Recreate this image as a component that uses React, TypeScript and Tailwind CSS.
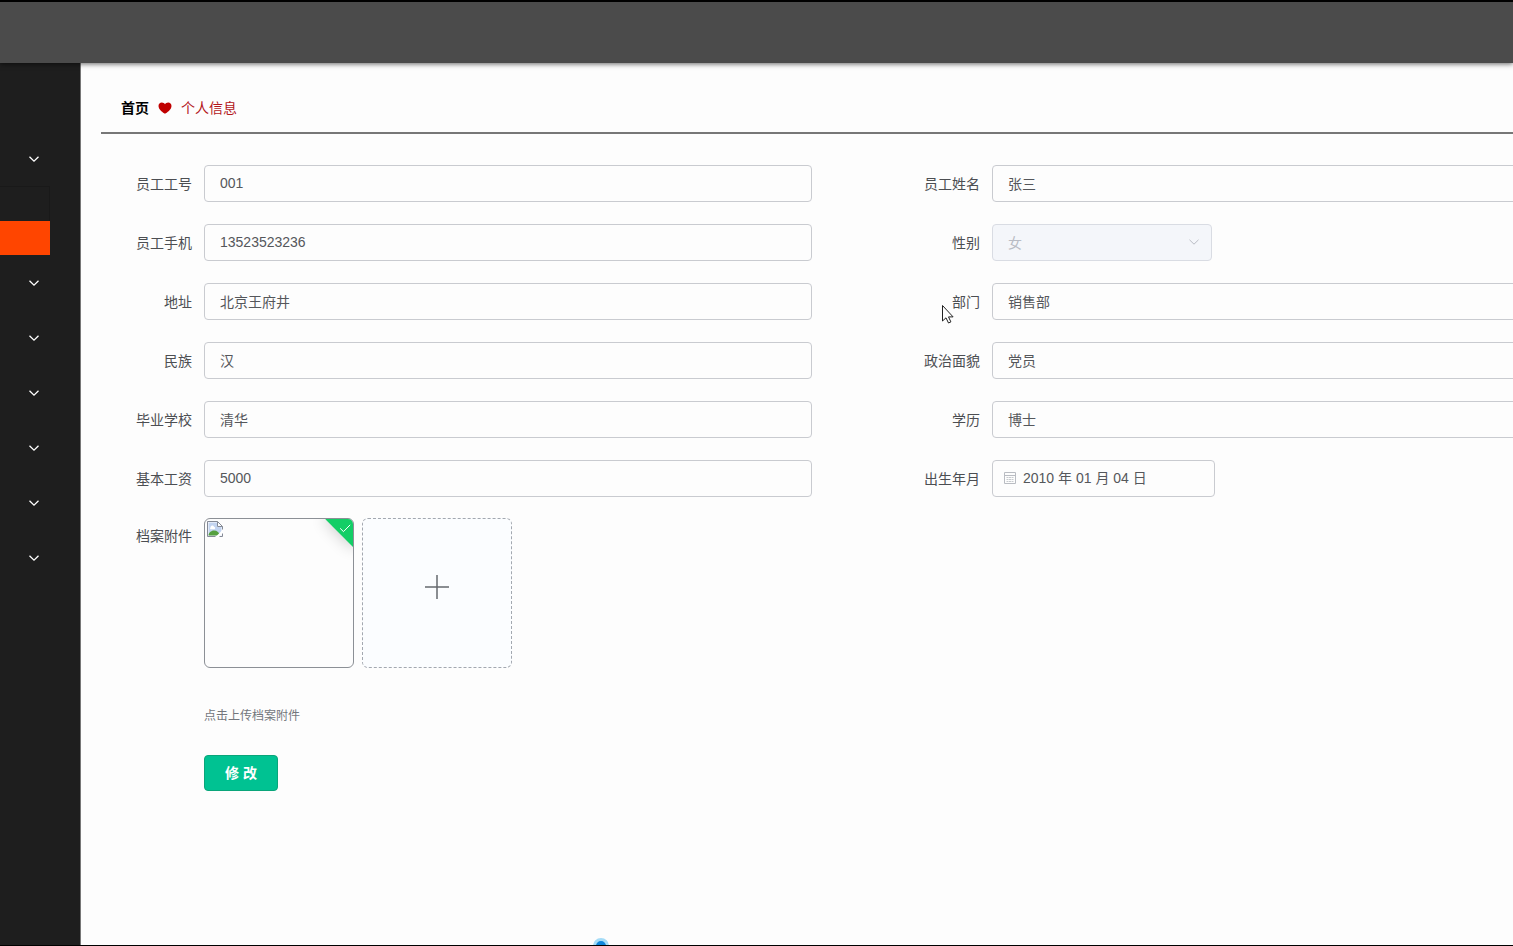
import React, { useState } from "react";

interface Employee {
  id: string;
  name: string;
  phone: string;
  gender: string;
  address: string;
  department: string;
  nation: string;
  politics: string;
  school: string;
  education: string;
  salary: string;
  birthday: string;
}

type Field = { key: keyof Employee; label: string; type?: "select" | "date" };

const fields: Field[] = [
  { key: "id", label: "员工工号" },
  { key: "name", label: "员工姓名" },
  { key: "phone", label: "员工手机" },
  { key: "gender", label: "性别", type: "select" },
  { key: "address", label: "地址" },
  { key: "department", label: "部门" },
  { key: "nation", label: "民族" },
  { key: "politics", label: "政治面貌" },
  { key: "school", label: "毕业学校" },
  { key: "education", label: "学历" },
  { key: "salary", label: "基本工资" },
  { key: "birthday", label: "出生年月", type: "date" },
];

const inputClass =
  "h-[37px] w-full rounded border border-[#c9cbd0] bg-[#fdfdfd] px-[15px] pb-[2px] text-sm text-[#55575b] outline-none focus:border-[#409eff]";

const Chevron = ({ className }: { className?: string }) => (
  <svg viewBox="0 0 12 12" className={className} fill="none" stroke="currentColor">
    <path d="M1.5 3.800 6 8.200l4.500-4.400" />
  </svg>
);

const Heart = () => (
  <svg viewBox="0 0 14 12" className="h-3 w-[14px]" fill="#c00000">
    <path d="M7 11.8C5.2 10.600.5 7.600.5 3.900.5 1.900 2 .5 3.800.5 5.200.5 6.400 1.200 7 2.300 7.600 1.200 8.800.5 10.200.5 12 .5 13.500 1.900 13.500 3.900 13.500 7.600 8.800 10.600 7 11.800z" />
  </svg>
);

const CalendarIcon = () => (
  <svg viewBox="0 0 14 14" className="h-[14px] w-[14px]" fill="none" stroke="#b9bcc2">
    <path d="M1.500 1.500h11v11h-11zM1.500 4.500h11" />
    <path d="M3.500 6.500h2M6 6.500h2M8.500 6.500h2M3.500 8.500h2M6 8.500h2M8.500 8.500h2M3.500 10.500h2M6 10.500h2M8.500 10.500h2" strokeWidth=".8" />
  </svg>
);

const BrokenImage = () => (
  <svg viewBox="0 0 16 16" className="h-4 w-4">
    <path d="M.5.500h10l5 5v10H.500z" fill="#fff" />
    <path d="M1.500 1.500h8.500v4.500h4.500v8.500h-13z" fill="#c3d4f0" />
    <path d="M3.500 6.500a1.800 1.800 0 0 1 3.500-.7 1.400 1.400 0 0 1 .6 2.500H4.300a1 1 0 0 1-.8-1.800z" fill="#fff" />
    <path d="M1.500 14.500c0-2.500 2.500-5 5.500-5s5.500 2 6 5z" fill="#55a03f" />
    <path d="M16 8.500 8.500 16h3.500l4-3.500z" fill="#fff" />
    <path d="M8.500 15.500H.500V.500h10l5 5v3M10.500.500v5h5M12.500 15.500h3v-3" fill="none" stroke="#858a96" />
  </svg>
);

const Sidebar = () => (
  <aside className="w-20 shrink-0 bg-[#1e1e1e] pt-[68px] shadow-[1px_0_0_#777]">
    <nav className="w-[50px] text-white">
      <MenuItem />
      <div className="border-t border-r border-[#191919] pt-[34px]">
        <button aria-label="个人信息" className="block h-[34px] w-[50px] bg-[#ff4500]"></button>
      </div>
      {[1, 2, 3, 4, 5, 6].map((i) => (
        <MenuItem key={i} />
      ))}
    </nav>
  </aside>
);

const MenuItem = () => (
  <button aria-label="展开菜单" className="flex h-[55px] w-full items-center justify-end pr-[10px]">
    <Chevron className="h-3 w-3 stroke-[1.3]" />
  </button>
);

const App = () => {
  // States
  const [employee, setEmployee] = useState<Employee>({
    id: "001",
    name: "张三",
    phone: "13523523236",
    gender: "女",
    address: "北京王府井",
    department: "销售部",
    nation: "汉",
    politics: "党员",
    school: "清华",
    education: "博士",
    salary: "5000",
    birthday: "2010 年 01 月 04 日",
  });
  // Functions
  const handleChange = (key: keyof Employee, value: string) => {
    setEmployee({ ...employee, [key]: value });
  };
  const renderField = ({ key, type }: Field) => {
    if (type === "select") {
      return (
        <div className="relative w-[220px]">
          <select
            id={key}
            disabled
            value={employee[key]}
            onChange={(e) => handleChange(key, e.target.value)}
            className="h-[37px] w-full appearance-none rounded border border-[#d9dce3] bg-[#f4f6fa] px-[15px] text-sm text-[#b9bcc4] opacity-100"
          >
            <option>女</option>
            <option>男</option>
          </select>
          <Chevron className="pointer-events-none absolute top-3 right-3 h-3 w-3 text-[#b9bcc4]" />
        </div>
      );
    }
    if (type === "date") {
      return (
        <div className="flex h-[37px] w-[223px] items-center gap-[6px] rounded border border-[#c9cbd0] bg-[#fdfdfd] px-[10px] pb-[2px]">
          <CalendarIcon />
          <input
            id={key}
            value={employee[key]}
            onChange={(e) => handleChange(key, e.target.value)}
            className="min-w-0 flex-1 text-sm text-[#55575b] outline-none"
          />
        </div>
      );
    }
    return (
      <input
        id={key}
        value={employee[key]}
        onChange={(e) => handleChange(key, e.target.value)}
        className={inputClass}
      />
    );
  };
  return (
    <div className="relative flex min-h-screen flex-col overflow-hidden border-t-2 border-b border-black bg-[#fdfdfd] font-['Liberation_Sans','Noto_Sans_CJK_SC',sans-serif] text-sm">
      {/* header */}
      <header className="z-10 h-[61px] bg-[#4b4b4b] shadow-[0_1px_5px_rgba(0,0,0,0.6)]"></header>
      <div className="flex flex-1">
        <Sidebar />
        <main className="min-w-0 flex-1 pt-5 pl-[21px]">
          <div className="flex h-[51px] items-center gap-[9px] border-b-2 border-[#777] pl-5">
            <a href="#" className="font-bold text-black">
              首页
            </a>
            <Heart />
            <span className="text-[#b3161b]">个人信息</span>
          </div>
          {/* form */}
          <form className="mt-[31px] w-[calc(100%+164px)]" onSubmit={(e) => e.preventDefault()}>
            <div className="grid grid-cols-2 gap-y-[22px]">
              {fields.map((field) => (
                <div key={field.key} className="flex items-center gap-3 pr-[77px]">
                  <label htmlFor={field.key} className="w-[91px] shrink-0 text-right text-[#4c4e52]">
                    {field.label}
                  </label>
                  <div className="flex-1">{renderField(field)}</div>
                </div>
              ))}
            </div>
            <div className="mt-[21px] flex gap-3">
              <span className="w-[91px] shrink-0 text-right leading-9 text-[#4c4e52]">档案附件</span>
              <div>
                <div className="flex gap-2">
                  <div className="relative h-[150px] w-[150px] overflow-hidden rounded-md border border-[#8c9096] bg-[#fdfdfd] p-[2px]">
                    <BrokenImage />
                    {/* uploaded mark */}
                    <div className="absolute -top-[6px] -right-[15px] flex h-6 w-10 rotate-45 items-end justify-center bg-[#13ce66] pb-[2px] shadow-[0_0_16px_1px_rgba(0,0,0,0.2)]">
                      <svg viewBox="0 0 12 12" className="h-3 w-3 -rotate-45" fill="none" stroke="#fff">
                        <path d="M1 6.500 4.300 9.800 11 3" />
                      </svg>
                    </div>
                  </div>
                  <button
                    type="button"
                    aria-label="上传"
                    className="flex h-[150px] w-[150px] justify-center rounded-md border border-dashed border-[#a3a8b0] bg-[#fbfdff] pt-14"
                  >
                    <svg viewBox="0 0 24 24" className="h-6 w-6" stroke="#66696f" strokeWidth="1.5">
                      <path d="M12 0v24M0 12h24" />
                    </svg>
                  </button>
                </div>
                <p className="mt-9 text-xs leading-6 text-[#73767c]">点击上传档案附件</p>
                <button className="mt-[27px] h-9 rounded border border-[#0aa57a] bg-[#00c292] px-5 font-bold text-white">
                  修 改
                </button>
              </div>
            </div>
          </form>
        </main>
      </div>
      {/* recorder dot */}
      <div className="absolute -bottom-[9px] left-[593px] h-4 w-4 rounded-full border-3 border-[#a5dcf7] bg-[#1087dc]"></div>
      {/* mouse pointer */}
      <svg viewBox="0 0 13 20" className="absolute top-[302px] left-[941px] z-20 h-5 w-[13px]" fill="#fff" stroke="#222">
        <path d="M1.500 1.500v15.500l3.500-3.200 2.500 5.200 2.400-1.100-2.400-5h4.600z" />
      </svg>
    </div>
  );
};

export default App;
